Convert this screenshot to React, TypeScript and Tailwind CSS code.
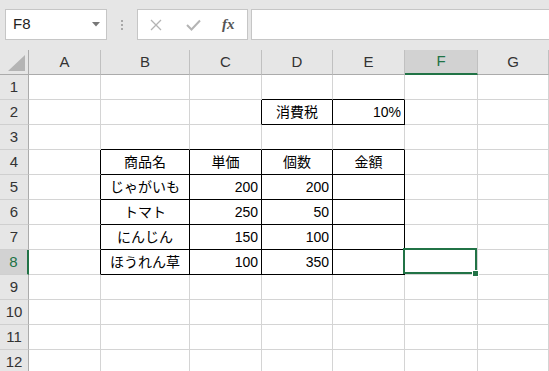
import React from "react";

const cols = ["A", "B", "C", "D", "E", "F", "G"];
const colWidths = ["w-[72px]", "w-[89px]", "w-[72px]", "w-[71px]", "w-[72px]", "w-[73px]", "w-[71px]"];
const rows = [1, 2, 3, 4, 5, 6, 7, 8, 9, 10, 11, 12];

type Cell = { text: string; align: "center" | "right" };

const data: Record<string, Cell> = {
  D2: { text: "消費税", align: "center" },
  E2: { text: "10%", align: "right" },
  B4: { text: "商品名", align: "center" },
  C4: { text: "単価", align: "center" },
  D4: { text: "個数", align: "center" },
  E4: { text: "金額", align: "center" },
  B5: { text: "じゃがいも", align: "center" },
  C5: { text: "200", align: "right" },
  D5: { text: "200", align: "right" },
  B6: { text: "トマト", align: "center" },
  C6: { text: "250", align: "right" },
  D6: { text: "50", align: "right" },
  B7: { text: "にんじん", align: "center" },
  C7: { text: "150", align: "right" },
  D7: { text: "100", align: "right" },
  B8: { text: "ほうれん草", align: "center" },
  C8: { text: "100", align: "right" },
  D8: { text: "350", align: "right" },
};

// which cells draw a black right / bottom edge
function blackRight(col: string, row: number) {
  if (row === 2 && (col === "C" || col === "D" || col === "E")) return true;
  if (row >= 4 && row <= 8 && ["A", "B", "C", "D", "E"].includes(col)) return true;
  return false;
}

function blackBottom(col: string, row: number) {
  if ((row === 1 || row === 2) && (col === "D" || col === "E")) return true;
  if (row >= 3 && row <= 8 && ["B", "C", "D", "E"].includes(col)) return true;
  return false;
}

function Toolbar() {
  return (
    <div className="h-[50px] bg-[#e6e6e6] flex items-start pt-[9px] pl-[5px]">
      <div className="w-[102px] h-[31px] bg-white border border-[#c6c6c6] flex items-center justify-between pl-[7px] pr-[6px]">
        <span className="text-[15px] text-[#222] font-['Liberation_Sans',sans-serif]">F8</span>
        <svg width="8" height="5" viewBox="0 0 8 5">
          <path d="M0 0 L8 0 L4 4.5 Z" fill="#777" />
        </svg>
      </div>
      <div className="w-[30px] h-[31px] flex flex-col items-center justify-center gap-[2px]">
        <div className="w-[2px] h-[2px] bg-[#a8a8a8]" />
        <div className="w-[2px] h-[2px] bg-[#a8a8a8]" />
        <div className="w-[2px] h-[2px] bg-[#a8a8a8]" />
      </div>
      <div className="w-[111px] h-[31px] bg-white border border-[#c6c6c6] flex items-center">
        <svg className="ml-[12px]" width="12" height="12" viewBox="0 0 12 12">
          <path d="M1 1 L11 11 M11 1 L1 11" stroke="#b4b4b4" strokeWidth="1.3" />
        </svg>
        <svg className="ml-[24px]" width="15" height="12" viewBox="0 0 15 12">
          <path d="M1 6 L5.5 10.5 L14 1.5" stroke="#b4b4b4" strokeWidth="2" fill="none" />
        </svg>
        <span className="ml-[21px] text-[15px] italic font-bold text-[#555] font-['Liberation_Serif',serif] leading-none">
          fx
        </span>
      </div>
      <div className="ml-[3px] flex-1 h-[31px] bg-white border border-[#c6c6c6] border-r-0" />
    </div>
  );
}

export default function App() {
  return (
    <div className="w-[549px] h-[371px] overflow-hidden bg-white font-['Liberation_Sans','Noto_Sans_CJK_JP',sans-serif]">
      <Toolbar />

      {/* column headers */}
      <div className="flex h-[25px]">
        <div className="w-[29px] shrink-0 bg-[#e6e6e6] border-r border-b border-[#ababab] relative">
          <svg className="absolute left-[8px] top-[5px]" width="17" height="16" viewBox="0 0 17 16">
            <path d="M17 0 L17 16 L0 16 Z" fill="#b4b4b4" />
          </svg>
        </div>
        {cols.map((c, i) => (
          <div
            key={c}
            className={`${colWidths[i]} shrink-0 flex items-center justify-center text-[15px] border-r border-r-[#c0c0c0] ${
              c === "F"
                ? "bg-[#d2d2d2] text-[#217346] border-b-2 border-b-[#217346]"
                : "bg-[#e6e6e6] text-[#333] border-b border-b-[#ababab]"
            }`}
          >
            {c}
          </div>
        ))}
      </div>

      {/* rows */}
      {rows.map((r) => (
        <div key={r} className="flex h-[25px]">
          <div
            className={`w-[29px] shrink-0 flex items-center justify-center text-[15px] border-b border-b-[#cfcfcf] ${
              r === 8
                ? "bg-[#d2d2d2] text-[#217346] border-r-2 border-r-[#217346]"
                : "bg-[#e6e6e6] text-[#333] border-r border-r-[#ababab]"
            }`}
          >
            {r}
          </div>
          {cols.map((c, i) => {
            const cell = data[`${c}${r}`];
            const br = blackRight(c, r) ? "border-r-black" : "border-r-[#d4d4d4]";
            const bb = blackBottom(c, r) ? "border-b-black" : "border-b-[#d4d4d4]";
            return (
              <div
                key={c}
                className={`${colWidths[i]} shrink-0 relative border-r border-b ${br} ${bb} flex items-center text-[14px] text-black whitespace-nowrap ${
                  cell?.align === "right" ? "justify-end pr-[3px]" : "justify-center"
                }`}
              >
                {cell?.text}
                {c === "F" && r === 8 && (
                  <div className="absolute -left-[2px] -top-[2px] right-0 bottom-0 border-2 border-[#217346] z-10">
                    <div className="absolute -right-[4px] -bottom-[5px] w-[7px] h-[7px] bg-[#217346] border border-white" />
                  </div>
                )}
              </div>
            );
          })}
        </div>
      ))}
    </div>
  );
}
